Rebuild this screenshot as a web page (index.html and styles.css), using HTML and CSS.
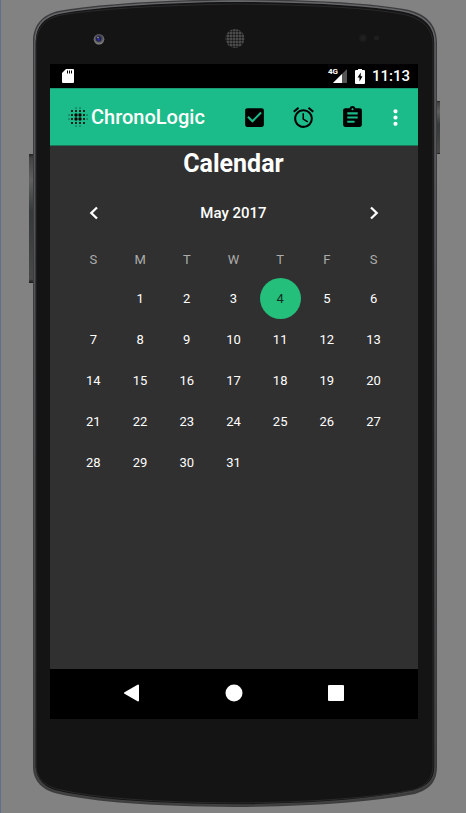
FILE: index.html
```html
<!DOCTYPE html>
<html lang="en">
<head>
<meta charset="utf-8">
<meta name="viewport" content="width=device-width, initial-scale=1">
<title>ChronoLogic</title>
<link rel="stylesheet" href="styles.css">
</head>
<body>
<div class="device">
  <svg class="shell" viewBox="0 0 466 813" preserveAspectRatio="none" aria-hidden="true">
    <defs>
      <linearGradient id="key" x1="0" x2="0" y1="0" y2="1">
        <stop offset="0" stop-color="#222"/><stop offset=".03" stop-color="#444"/><stop offset=".2" stop-color="#606060"/><stop offset=".45" stop-color="#363a3a"/><stop offset=".97" stop-color="#484848"/><stop offset="1" stop-color="#181818"/>
      </linearGradient>
      <linearGradient id="edge" x1="0" x2="0" y1="0" y2="1">
        <stop offset="0" stop-color="#66676a"/><stop offset=".3" stop-color="#5e5f64"/><stop offset=".8" stop-color="#4b4b4d"/><stop offset="1" stop-color="#414141"/>
      </linearGradient>
      <pattern id="mesh" width="3" height="3" patternUnits="userSpaceOnUse">
        <rect width="3" height="3" fill="#5a5a5a"/><circle cx="1.5" cy="1.5" r="1.200" fill="#1a1a1a"/>
      </pattern>
      <radialGradient id="lens" cx=".5" cy=".4" r=".6">
        <stop offset="0" stop-color="#2d2dc0"/><stop offset=".3" stop-color="#333052"/><stop offset=".6" stop-color="#55555d"/><stop offset="1" stop-color="#929292"/>
      </radialGradient>
    </defs>
    <rect width="1" height="813" fill="#60708c"/>
    <rect x="29" y="154" width="5" height="129" fill="url(#key)"/>
    <rect x="435" y="101" width="5" height="53" fill="url(#key)"/>
    <path d="M33 150V42C33 24 43 15 58 11Q116 1 235 -1Q352 0 404 9C426 13 437 24 437 43V766C437 782 430 789 415 794Q350 806 235 807Q112 806 59 794C43 791 33 781 33 767Z" fill="#3c3c3d"/>
    <path d="M35 150V42C35 25 45 16 60 13Q116 3 235 1Q352 2 403 11C424 15 435 26 435 43V766C435 780 428 787 414 791Q350 804 235 805Q113 804 60 792C45 789 35 780 35 766Z" fill="#141414" stroke="url(#edge)" stroke-width="1.4"/>
    <path d="M36 150V44C36 28 46 18 61 15Q116 6 235 4Q351 5 402 14C422 18 433 28 433 45V765C433 778 427 786 413 790Q350 802 235 803Q113 802 61 790C46 787 36 779 36 765Z" fill="#141414" stroke="#292929"/>
    <circle cx="99" cy="39.300" r="5.300" fill="url(#lens)"/>
    <circle cx="98.500" cy="39" r="2.500" fill="#202030"/><circle cx="98.500" cy="39.500" r="1.300" fill="#292cc5"/><circle cx="98" cy="37.500" r=".8" fill="#aaa"/>
    <circle cx="235" cy="38.500" r="9.500" fill="url(#mesh)"/>
    <circle cx="363" cy="38" r="4" fill="#1b1b1b"/><circle cx="363" cy="38" r="2" fill="#222"/><circle cx="376.500" cy="38" r="2.500" fill="#1f1f1f"/>
  </svg>

  <div class="screen">
    <div class="status">
      <svg class="sd" width="12" height="14" viewBox="0 0 12 14" aria-hidden="true"><path fill="#fff" d="M4 0H11Q12 0 12 1V13Q12 14 11 14H1Q0 14 0 13V4Z"/><path stroke="#000" d="M5.500 1.500V4.500M7.500 1.500V4.500M9.500 1.500V4.500"/></svg>
      <span class="network">4G</span>
      <svg class="signal" width="14" height="14" viewBox="0 0 14 14" aria-hidden="true"><path fill="#555" d="M14 0V14H0Z"/><path fill="#fff" d="M9 5V14H0Z"/></svg>
      <svg class="battery" width="10" height="15" viewBox="0 0 10 15" aria-hidden="true"><path fill="#fff" d="M3 0H7V1H9Q10 1 10 2V14Q10 15 9 15H1Q0 15 0 14V2Q0 1 1 1H3Z"/><path d="M5.800 3.500L2.500 8.500H4.500V12.500L7.500 7.300H5.700Z"/></svg>
      <time class="clock">11:13</time>
    </div>

    <header class="appbar">
      <svg class="logo" width="20" height="20" viewBox="0 0 20 20" aria-hidden="true">
        <g fill="none" stroke="#000" stroke-linecap="round">
          <path stroke-width="1.100" d="M8 1h.01M12 1h.01M8 19h.01M12 19h.01M1 8h.01M1 12h.01M19 8h.01M19 12h.01"/>
          <path stroke-width="2.100" d="M4 4h.01M16 4h.01M4 16h.01M16 16h.01M4 8h.01M4 12h.01M16 8h.01M16 12h.01M8 4h.01M12 4h.01M8 16h.01M12 16h.01"/>
          <path stroke-width="3.300" d="M8 8h.01M12 8h.01M8 12h.01M12 12h.01"/>
        </g>
      </svg>
      <h1 class="brand">ChronoLogic</h1>
      <nav class="actions" aria-label="Sections">
        <button type="button" class="action" aria-label="Tasks"><svg width="25" height="25" viewBox="0 0 24 24"><path d="M19 3H5c-1.110 0-2 .9-2 2v14c0 1.100.89 2 2 2h14c1.110 0 2-.9 2-2V5c0-1.100-.89-2-2-2zm-9 14l-5-5 1.410-1.410L10 14.170l7.590-7.590L19 8l-9 9z"/></svg></button>
        <button type="button" class="action" aria-label="Alarms"><svg width="25" height="25" viewBox="0 0 24 24"><path d="M22 5.720l-4.600-3.860-1.290 1.530 4.600 3.860L22 5.720zM7.880 3.390L6.600 1.860 2 5.710l1.290 1.530 4.590-3.850zM12.500 8H11v6l4.750 2.850.75-1.230-4-2.370V8zM12 4c-4.970 0-9 4.030-9 9s4.020 9 9 9a9 9 0 0 0 0-18zm0 16c-3.870 0-7-3.130-7-7s3.130-7 7-7 7 3.130 7 7-3.130 7-7 7z"/></svg></button>
        <button type="button" class="action" aria-label="Notes"><svg width="25" height="25" viewBox="0 0 24 24"><path d="M19 3h-4.180C14.400 1.840 13.300 1 12 1c-1.300 0-2.400.84-2.820 2H5c-1.100 0-2 .9-2 2v14c0 1.100.9 2 2 2h14c1.100 0 2-.9 2-2V5c0-1.100-.9-2-2-2zm-7 0c.55 0 1 .45 1 1s-.45 1-1 1-1-.45-1-1 .45-1 1-1zm2 14H7v-2h7v2zm3-4H7v-2h10v2zm0-4H7V7h10v2z"/></svg></button>
        <button type="button" class="action more" aria-label="More options"><svg width="25" height="25" viewBox="0 0 24 24"><path fill="#fff" d="M12 8c1.100 0 2-.9 2-2s-.9-2-2-2-2 .9-2 2 .9 2 2 2zm0 2c-1.100 0-2 .9-2 2s.9 2 2 2 2-.9 2-2-.9-2-2-2zm0 6c-1.100 0-2 .9-2 2s.9 2 2 2 2-.9 2-2-.9-2-2-2z"/></svg></button>
      </nav>
    </header>

    <main class="content">
      <h2 class="title">Calendar</h2>
      <div class="monthbar">
        <button type="button" class="step" aria-label="Previous month"><svg width="24" height="24" viewBox="0 0 24 24"><path fill="none" stroke="#fff" stroke-width="2.300" d="M15 6.500L9.300 12L15 17.500"/></svg></button>
        <h3 class="month">May 2017</h3>
        <button type="button" class="step" aria-label="Next month"><svg width="24" height="24" viewBox="0 0 24 24"><path fill="none" stroke="#fff" stroke-width="2.300" d="M9 6.500L14.700 12L9 17.500"/></svg></button>
      </div>
      <table class="calendar">
        <thead><tr><th>S</th><th>M</th><th>T</th><th>W</th><th>T</th><th>F</th><th>S</th></tr></thead>
        <tbody>
          <tr><td></td><td>1</td><td>2</td><td>3</td><td aria-current="date"><span class="today">4</span></td><td>5</td><td>6</td></tr>
          <tr><td>7</td><td>8</td><td>9</td><td>10</td><td>11</td><td>12</td><td>13</td></tr>
          <tr><td>14</td><td>15</td><td>16</td><td>17</td><td>18</td><td>19</td><td>20</td></tr>
          <tr><td>21</td><td>22</td><td>23</td><td>24</td><td>25</td><td>26</td><td>27</td></tr>
          <tr><td>28</td><td>29</td><td>30</td><td>31</td><td></td><td></td><td></td></tr>
        </tbody>
      </table>
    </main>

    <nav class="navbar" aria-label="System">
      <button type="button" class="key" aria-label="Back"><svg width="18" height="18" viewBox="0 0 18 18"><path fill="#fff" stroke="#fff" stroke-linejoin="round" stroke-width="2" d="M2 9L15 1.500V16.500Z"/></svg></button>
      <button type="button" class="key" aria-label="Home"><svg width="18" height="18" viewBox="0 0 18 18"><circle fill="#fff" cx="9" cy="9" r="8.500"/></svg></button>
      <button type="button" class="key" aria-label="Recent apps"><svg width="18" height="18" viewBox="0 0 18 18"><rect fill="#fff" x="1" y="1" width="16" height="16" rx="1"/></svg></button>
    </nav>
  </div>
</div>
</body>
</html>
```

FILE: styles.css
```css
* {
  box-sizing: border-box;
}

body {
  margin: 0;
  background: #828282;
  color: #fff;
  font-family: Roboto, "Liberation Sans", sans-serif;
}

button {
  display: flex;
  align-items: center;
  justify-content: center;
  padding: 0;
  border: 0;
  background: none;
}

h1, h2, h3 {
  margin: 0;
}

.device {
  position: relative;
  display: flex;
  min-height: 100vh;
  padding: 64px 48px 94px 50px;
}

.shell {
  position: absolute;
  inset: 0;
  width: 100%;
  height: 100%;
}

.screen {
  position: relative;
  display: flex;
  flex: 1;
  flex-direction: column;
  background: #303030;
}

.status {
  display: flex;
  align-items: center;
  height: 24px;
  padding: 0 8px 0 12px;
  background: #000;
}

.network {
  align-self: flex-start;
  margin-left: auto;
  padding-top: 4px;
  font-size: 8px;
  font-weight: 700;
  line-height: 8px;
}

.signal {
  margin-left: -5px;
}

.battery {
  margin: 0 7px 0 8px;
}

.clock {
  font-size: 15px;
  font-weight: 500;
  line-height: 24px;
}

.appbar {
  display: flex;
  align-items: center;
  height: 58px;
  padding-left: 18px;
  border-top: 1px solid #199b73;
  border-bottom: 1px solid #1a7859;
  background: #1cbb8a;
}

.brand {
  margin-left: 3px;
  font-size: 20px;
  font-weight: 500;
  line-height: 24px;
}

.actions {
  display: flex;
  margin-left: auto;
}

.action {
  width: 49px;
  height: 48px;
}

.more {
  width: 41px;
  padding-right: 5px;
}

.content {
  flex: 1;
  padding: 0 21px 0 20px;
}

.title {
  font-size: 25px;
  font-weight: 700;
  line-height: 36px;
  text-align: center;
}

.monthbar {
  display: flex;
  align-items: center;
  justify-content: space-between;
  height: 62px;
}

.step {
  width: 47px;
  height: 47px;
}

.month {
  font-size: 15px;
  font-weight: 500;
}

.calendar {
  width: 100%;
  border-collapse: collapse;
  table-layout: fixed;
  font-size: 13px;
  text-align: center;
}

.calendar th,
.calendar td {
  height: 41px;
  padding: 0;
}

.calendar th {
  height: 34px;
  padding-bottom: 4px;
  color: #acacac;
  font-weight: 400;
}

.today {
  display: flex;
  align-items: center;
  justify-content: center;
  width: 41px;
  height: 41px;
  margin: 0 auto;
  border-radius: 50%;
  background: #23bf7b;
  color: #152c21;
}

.navbar {
  display: flex;
  justify-content: center;
  gap: 4px;
  height: 50px;
  background: #000;
}

.key {
  width: 98px;
  height: 48px;
}
```
